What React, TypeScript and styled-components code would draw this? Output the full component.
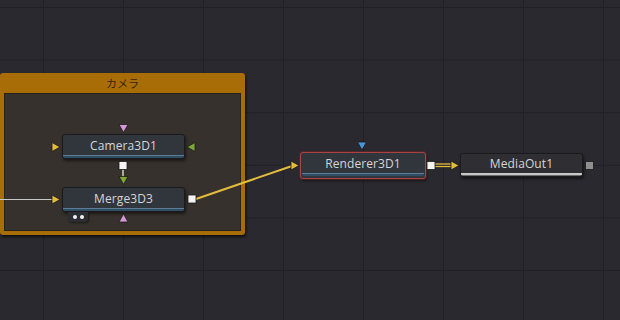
import React from "react";
import styled, { createGlobalStyle } from "styled-components";

const Global = createGlobalStyle`
  html, body { margin: 0; padding: 0; background: #28282e; overflow: hidden; }
  #root { width: 620px; height: 320px; }
`;

const Canvas = styled.div`
  position: relative;
  width: 620px;
  height: 320px;
  overflow: hidden;
  background-color: #29292f;
  background-image:
    linear-gradient(to right, #202025 1px, transparent 1px),
    linear-gradient(to bottom, #202025 1px, transparent 1px);
  background-size: 80px 52.6px;
  background-position: 43px 7px;
  font-family: "Open Sans", "Noto Sans", "Noto Sans CJK JP", sans-serif;
`;

const Group = styled.div<{ $x: number; $y: number; $w: number; $h: number }>`
  position: absolute;
  left: ${(p) => p.$x}px;
  top: ${(p) => p.$y}px;
  width: ${(p) => p.$w}px;
  height: ${(p) => p.$h}px;
  box-sizing: border-box;
  display: flex;
  flex-direction: column;
  background: #a86d06;
  border-radius: 3px;
  box-shadow: 1px 2px 3px rgba(0, 0, 0, 0.65);
  padding: 0 4px 4px;
`;

const GroupTitle = styled.div`
  height: 20px;
  display: flex;
  align-items: center;
  justify-content: center;
  font-family: "Noto Sans CJK JP", "Noto Sans", sans-serif;
  font-size: 11px;
  color: #3a2407;
`;

const GroupBody = styled.div`
  flex: 1;
  background: #36312c;
  box-shadow: inset 0 0 0 1px #28231e;
`;

type Accent = "blue" | "gray";

const Node = styled.div<{ $x: number; $y: number; $w: number; $h: number; $accent: Accent; $selected?: boolean }>`
  position: absolute;
  left: ${(p) => p.$x}px;
  top: ${(p) => p.$y}px;
  width: ${(p) => p.$w}px;
  height: ${(p) => p.$h}px;
  box-sizing: border-box;
  display: flex;
  flex-direction: column;
  border-radius: 3px;
  background: ${(p) => (p.$accent === "gray" ? "#2e2e33" : "#31353c")};
  border: 1px solid ${(p) => (p.$selected ? "#a84444" : "#1b1b1f")};
  box-shadow: ${(p) =>
    p.$selected ? "0 0 0 1px rgba(120,40,40,0.5), 1px 2px 3px rgba(0,0,0,0.5)" : "1px 2px 3px rgba(0,0,0,0.5)"};
  padding: ${(p) => (p.$selected ? "1px 1px 2px" : "0")};
`;

const NodeLabel = styled.div`
  flex: 1;
  display: flex;
  align-items: center;
  justify-content: center;
  font-size: 12px;
  color: #d6d6d6;
  letter-spacing: 0.1px;
`;

const NodeBar = styled.div<{ $accent: Accent }>`
  height: 3px;
  border-radius: 0 0 2px 2px;
  background: ${(p) =>
    p.$accent === "gray"
      ? "linear-gradient(to bottom, #c8c8c8 0, #c8c8c8 2px, #6a6a6a 2px)"
      : "linear-gradient(to bottom, #5b7c94 0, #5b7c94 1px, #2f4d63 1px)"};
`;

const Tab = styled.div<{ $x: number; $y: number }>`
  position: absolute;
  left: ${(p) => p.$x}px;
  top: ${(p) => p.$y}px;
  width: 20px;
  height: 10px;
  box-sizing: border-box;
  display: flex;
  align-items: center;
  justify-content: center;
  gap: 3px;
  background: #2b2d32;
  border-radius: 0 0 3px 3px;
  box-shadow: 1px 1px 2px rgba(0, 0, 0, 0.5);
`;

const Dot = styled.span`
  width: 4px;
  height: 4px;
  border-radius: 50%;
  background: #f2f2f2;
`;

const Wires = styled.svg`
  position: absolute;
  left: 0;
  top: 0;
  pointer-events: none;
`;

const YELLOW = "#e3bc3e";
const GREEN = "#7ea634";
const PINK = "#d59ad6";
const BLUE = "#4b95d6";

type Dir = "right" | "left" | "down" | "up";

function Tri({ x, y, dir, color }: { x: number; y: number; dir: Dir; color: string }) {
  const a = 4.5;
  const b = 4;
  let pts = "";
  if (dir === "right") pts = `${x - b},${y - a} ${x + b},${y} ${x - b},${y + a}`;
  if (dir === "left") pts = `${x + b},${y - a} ${x - b},${y} ${x + b},${y + a}`;
  if (dir === "down") pts = `${x - a},${y - b} ${x + a},${y - b} ${x},${y + b}`;
  if (dir === "up") pts = `${x - a},${y + b} ${x + a},${y + b} ${x},${y - b}`;
  return <polygon points={pts} fill={color} stroke="#1a1a1a" strokeWidth={0.8} strokeLinejoin="round" />;
}

function Sq({ x, y, color }: { x: number; y: number; color: string }) {
  return <rect x={x - 4} y={y - 4} width={8} height={8} fill={color} stroke="#1a1a1a" strokeWidth={0.8} />;
}

export default function App() {
  return (
    <>
      <Global />
      <Canvas>
        <Group $x={0} $y={73} $w={245} $h={162}>
          <GroupTitle>カメラ</GroupTitle>
          <GroupBody />
        </Group>

        <Node $x={62} $y={134} $w={123} $h={25} $accent="blue">
          <NodeLabel>Camera3D1</NodeLabel>
          <NodeBar $accent="blue" />
        </Node>

        <Node $x={62} $y={187} $w={123} $h={25} $accent="blue">
          <NodeLabel>Merge3D3</NodeLabel>
          <NodeBar $accent="blue" />
        </Node>
        <Tab $x={68} $y={212}>
          <Dot />
          <Dot />
        </Tab>

        <Node $x={300} $y={152} $w={126} $h={27} $accent="blue" $selected>
          <NodeLabel>Renderer3D1</NodeLabel>
          <NodeBar $accent="blue" />
        </Node>

        <Node $x={460} $y={153} $w={123} $h={24} $accent="gray">
          <NodeLabel>MediaOut1</NodeLabel>
          <NodeBar $accent="gray" />
        </Node>

        <Wires width={620} height={320} viewBox="0 0 620 320">
          <line x1={0} y1={199.5} x2={52} y2={199.5} stroke="#c9c9c9" strokeWidth={1.2} />
          <line x1={123} y1={169} x2={123} y2={177} stroke="#d8e6c0" strokeWidth={1.4} />
          <line x1={196} y1={199} x2={292} y2={166} stroke={YELLOW} strokeWidth={2} />
          <line x1={435} y1={164} x2={452} y2={164} stroke={YELLOW} strokeWidth={1.3} />
          <line x1={435} y1={166.5} x2={452} y2={166.5} stroke={YELLOW} strokeWidth={1.3} />

          <Tri x={123.5} y={128.5} dir="down" color={PINK} />
          <Tri x={56} y={147} dir="right" color={YELLOW} />
          <Tri x={191} y={147} dir="left" color={GREEN} />
          <Sq x={123} y={165.5} color="#f4f4f4" />

          <Tri x={123.5} y={180.5} dir="down" color={GREEN} />
          <Tri x={56} y={199.5} dir="right" color={YELLOW} />
          <Sq x={192} y={199} color="#f4f4f4" />
          <Tri x={123.5} y={218} dir="up" color={PINK} />

          <Tri x={362} y={146} dir="down" color={BLUE} />
          <Tri x={295} y={165.5} dir="right" color={YELLOW} />
          <Sq x={431} y={165.5} color="#f4f4f4" />

          <Tri x={455} y={165.5} dir="right" color={YELLOW} />
          <Sq x={589.5} y={165.5} color="#8e8e8e" />
        </Wires>
      </Canvas>
    </>
  );
}
